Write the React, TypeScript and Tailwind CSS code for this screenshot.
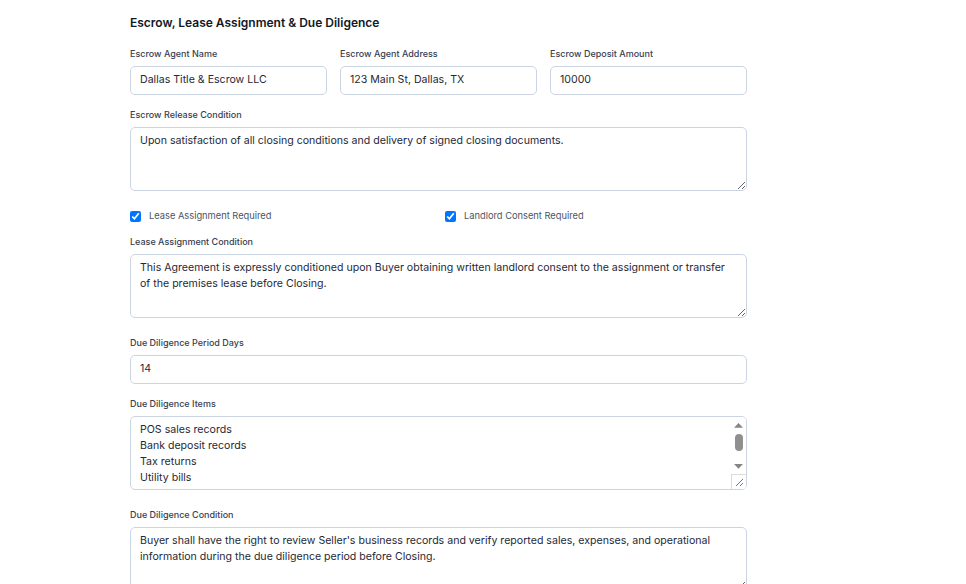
import React from "react";

const labelCls = "block text-[9px] leading-[12px] font-medium text-[#374151] mb-[6px]";
const inputCls =
  "block w-full h-[29px] rounded-[5px] border border-[#cbd5e1] bg-white px-[9px] pb-[2px] text-[10.6px] text-[#1f2937] outline-none";
const areaCls =
  "block w-full rounded-[5px] border border-[#cbd5e1] bg-white px-[9px] pt-[5px] text-[10.6px] leading-[16px] text-[#1f2937] outline-none";

export default function App() {
  const items = ["POS sales records", "Bank deposit records", "Tax returns", "Utility bills"].join("\n");
  return (
    <div
      className="min-h-[584px] bg-white pl-[130px] pt-[15px]"
      style={{ fontFamily: "Inter, 'Noto Sans', sans-serif" }}
    >
      <div className="w-[617px]">
        <h2 className="text-[12px] leading-[16px] font-semibold text-[#111827]">
          Escrow, Lease Assignment &amp; Due Diligence
        </h2>

        <div className="mt-[17px] grid grid-cols-3 gap-[13px]">
          <div>
            <label className={labelCls}>Escrow Agent Name</label>
            <input className={inputCls} defaultValue="Dallas Title & Escrow LLC" />
          </div>
          <div>
            <label className={labelCls}>Escrow Agent Address</label>
            <input className={inputCls} defaultValue="123 Main St, Dallas, TX" />
          </div>
          <div>
            <label className={labelCls}>Escrow Deposit Amount</label>
            <input className={inputCls} defaultValue="10000" />
          </div>
        </div>

        <div className="mt-[14px]">
          <label className={labelCls}>Escrow Release Condition</label>
          <textarea
            className={`${areaCls} h-[64px]`}
            defaultValue="Upon satisfaction of all closing conditions and delivery of signed closing documents."
          />
        </div>

        <div className="mt-[18px] grid grid-cols-2 gap-[13px] h-[14px]">
          <label className="flex items-center gap-[8px] text-[9.3px] text-[#4b5563]">
            <input type="checkbox" defaultChecked className="w-[11px] h-[11px] m-0 accent-[#0075ff]" />
            Lease Assignment Required
          </label>
          <label className="flex items-center gap-[8px] text-[9.3px] text-[#4b5563]">
            <input type="checkbox" defaultChecked className="w-[11px] h-[11px] m-0 accent-[#0075ff]" />
            Landlord Consent Required
          </label>
        </div>

        <div className="mt-[13px]">
          <label className={labelCls}>Lease Assignment Condition</label>
          <textarea
            className={`${areaCls} h-[64px]`}
            defaultValue="This Agreement is expressly conditioned upon Buyer obtaining written landlord consent to the assignment or transfer of the premises lease before Closing."
          />
        </div>

        <div className="mt-[19px]">
          <label className={labelCls}>Due Diligence Period Days</label>
          <input className={inputCls} defaultValue="14" />
        </div>

        <div className="mt-[14px]">
          <label className={labelCls}>Due Diligence Items</label>
          <div className="relative">
            <textarea
              className={`${areaCls} h-[74px] overflow-hidden pr-[20px]`}
              defaultValue={items}
            />
            <div className="absolute right-[1px] top-[1px] bottom-[1px] w-[15px] bg-white rounded-tr-[4px] rounded-br-[4px] flex flex-col items-center">
              <svg width="15" height="14" viewBox="0 0 15 14" className="mt-[1px]">
                <polygon points="3,10 7.5,5 12,10" fill="#858585" />
              </svg>
              <div className="w-[8px] h-[18px] rounded-[4px] bg-[#8f8f8f] mt-[2px]" />
              <svg width="15" height="14" viewBox="0 0 15 14" className="mt-[9px]">
                <polygon points="3,4 12,4 7.5,9" fill="#858585" />
              </svg>
              <div className="mt-auto w-[15px] h-[15px] border-l border-t border-[#dcdcdc] bg-white flex items-end justify-end rounded-br-[4px]">
                <svg width="9" height="9" viewBox="0 0 9 9" className="mb-[2px] mr-[2px]">
                  <line x1="8" y1="1" x2="1" y2="8" stroke="#6b6b6b" strokeWidth="0.9" />
                  <line x1="8" y1="5" x2="5" y2="8" stroke="#6b6b6b" strokeWidth="0.9" />
                </svg>
              </div>
            </div>
          </div>
        </div>

        <div className="mt-[19px]">
          <label className={labelCls}>Due Diligence Condition</label>
          <textarea
            className={`${areaCls} h-[64px]`}
            defaultValue="Buyer shall have the right to review Seller's business records and verify reported sales, expenses, and operational information during the due diligence period before Closing."
          />
        </div>
      </div>
    </div>
  );
}
